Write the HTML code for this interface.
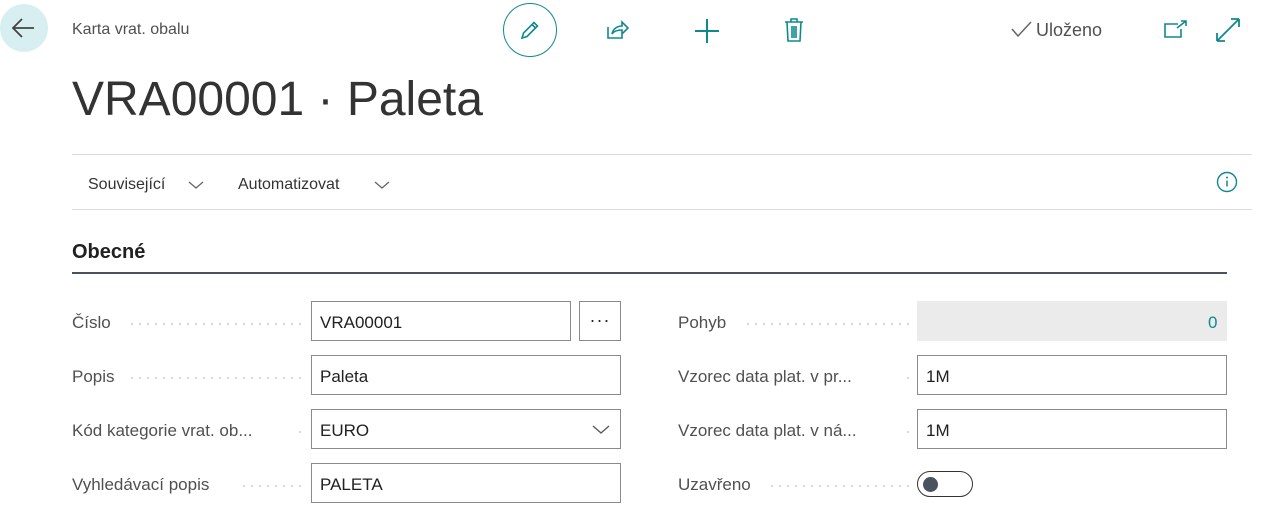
<!DOCTYPE html>
<html><head><meta charset="utf-8"><style>
body{margin:0;width:1280px;height:511px;overflow:hidden;background:#fff;font-family:"Liberation Sans",sans-serif;color:#505050;position:relative}
.a{position:absolute}
.lbl{position:absolute;font-size:17px;color:#505050;white-space:nowrap}
.dots{position:absolute;height:2px;background-image:radial-gradient(circle,#cfcfcf 0.9px,transparent 1.1px);background-size:8px 2px;background-repeat:repeat-x}
.inp{position:absolute;box-sizing:border-box;height:40px;border:1px solid #8a8a8a;background:#fff;font-size:17px;color:#212121;padding:11px 0 0 8px}
</style></head><body>
<div class="a" style="left:0;top:4px;width:48px;height:48px;border-radius:50%;background:#d8eff2"></div>
<svg class="a" style="left:10px;top:16px" width="26" height="24" viewBox="0 0 26 24"><path d="M24 12H3M12 3L3 12l9 9" stroke="#444" stroke-width="1.8" fill="none"/></svg>
<div class="a" style="left:72px;top:21px;font-size:16px;color:#505050">Karta vrat. obalu</div>
<div class="a" style="left:503px;top:3px;width:52px;height:52px;border:1.5px solid #0e8a8f;border-radius:50%"></div>
<svg class="a" style="left:518px;top:18px" width="24" height="24" viewBox="0 0 24 24"><path d="M4 20l1.5-5L16 4.5l3.5 3.5L9 18.5z M14 6.5l3.5 3.5" stroke="#0e8a8f" stroke-width="1.6" fill="none"/></svg>
<svg class="a" style="left:605px;top:18px" width="26" height="24" viewBox="0 0 26 24"><path d="M3 9v11h14v-4M7 16c1-5 5-8 10-8V4l6 6-6 6v-4c-4 0-8 1-10 4z" stroke="#0e8a8f" stroke-width="1.6" fill="none"/></svg>
<svg class="a" style="left:694px;top:18px" width="26" height="26" viewBox="0 0 26 26"><path d="M13 1v24M1 13h24" stroke="#0e8a8f" stroke-width="2" fill="none"/></svg>
<svg class="a" style="left:782px;top:17px" width="24" height="26" viewBox="0 0 24 26"><path d="M3 5h18M9 5V2h6v3M5 5l1 19h12l1-19M10 9v12M12 9v12M14 9v12" stroke="#0e8a8f" stroke-width="1.6" fill="none"/></svg>
<svg class="a" style="left:1011px;top:20px" width="22" height="18" viewBox="0 0 22 18"><path d="M1 9l6 7L20 2" stroke="#666" stroke-width="1.5" fill="none"/></svg>
<div class="a" style="left:1036px;top:20px;font-size:18px;color:#505050">Uloženo</div>
<svg class="a" style="left:1163px;top:18px" width="26" height="24" viewBox="0 0 26 24"><path d="M15 6H2v13h16v-8M14 10l9-7M18 3h5v5" stroke="#0e8a8f" stroke-width="1.6" fill="none"/></svg>
<svg class="a" style="left:1215px;top:17px" width="26" height="26" viewBox="0 0 26 26"><path d="M2 24L24 2M2 24v-8M2 24h8M24 2h-8M24 2v8" stroke="#0e8a8f" stroke-width="1.8" fill="none"/></svg>
<div class="a" style="left:72px;top:72px;font-size:48px;color:#333;font-weight:300">VRA00001 · Paleta</div>
<div class="a" style="left:72px;top:154px;width:1180px;height:1px;background:#dcdcdc"></div>
<div class="a" style="left:88px;top:176px;font-size:16px;color:#333">Související</div>
<svg class="a" style="left:188px;top:180px" width="16" height="10"><path d="M1 2l7 6 7-6" stroke="#666" stroke-width="1.3" fill="none"/></svg>
<div class="a" style="left:238px;top:176px;font-size:16px;color:#333">Automatizovat</div>
<svg class="a" style="left:374px;top:180px" width="16" height="10"><path d="M1 2l7 6 7-6" stroke="#666" stroke-width="1.3" fill="none"/></svg>
<svg class="a" style="left:1216px;top:171px" width="22" height="22" viewBox="0 0 22 22"><circle cx="11" cy="11" r="9.5" stroke="#0e8a8f" stroke-width="1.4" fill="none"/><path d="M11 9.5v6" stroke="#0e8a8f" stroke-width="1.5"/><circle cx="11" cy="6.5" r="1" fill="#0e8a8f"/></svg>
<div class="a" style="left:72px;top:209px;width:1180px;height:1px;background:#dcdcdc"></div>
<div class="a" style="left:72px;top:241px;font-size:20px;font-weight:bold;color:#212121">Obecné</div>
<div class="a" style="left:72px;top:272px;width:1155px;height:2px;background:#4a5260"></div>

<div class="lbl" style="left:72px;top:313px">Číslo</div><div class="dots" style="left:128px;top:323px;width:176px"></div>
<div class="inp" style="left:311px;top:301px;width:260px">VRA00001</div>
<div class="inp" style="left:579px;top:301px;width:42px;padding:0;text-align:center;font-size:18px;line-height:36px;letter-spacing:1px">···</div>
<div class="lbl" style="left:72px;top:367px">Popis</div><div class="dots" style="left:128px;top:377px;width:176px"></div>
<div class="inp" style="left:311px;top:355px;width:310px">Paleta</div>
<div class="lbl" style="left:72px;top:421px">Kód kategorie vrat. ob...</div><div class="dots" style="left:296px;top:431px;width:8px"></div>
<div class="inp" style="left:311px;top:409px;width:310px">EURO</div>
<svg class="a" style="left:592px;top:424px" width="18" height="11"><path d="M1 2l8 7 8-7" stroke="#555" stroke-width="1.3" fill="none"/></svg>
<div class="lbl" style="left:72px;top:475px">Vyhledávací popis</div><div class="dots" style="left:240px;top:485px;width:64px"></div>
<div class="inp" style="left:311px;top:463px;width:310px">PALETA</div>

<div class="lbl" style="left:678px;top:313px">Pohyb</div><div class="dots" style="left:744px;top:323px;width:168px"></div>
<div class="a" style="left:917px;top:301px;width:310px;height:40px;background:#ebebeb"></div>
<div class="a" style="left:1208px;top:313px;font-size:17px;color:#0e8a8f">0</div>
<div class="lbl" style="left:678px;top:367px">Vzorec data plat. v pr...</div><div class="dots" style="left:904px;top:377px;width:8px"></div>
<div class="inp" style="left:917px;top:355px;width:310px">1M</div>
<div class="lbl" style="left:678px;top:421px">Vzorec data plat. v ná...</div><div class="dots" style="left:904px;top:431px;width:8px"></div>
<div class="inp" style="left:917px;top:409px;width:310px">1M</div>
<div class="lbl" style="left:678px;top:475px">Uzavřeno</div><div class="dots" style="left:768px;top:485px;width:144px"></div>
<div class="a" style="left:917px;top:471px;width:56px;height:26px;box-sizing:border-box;border:1.5px solid #333;border-radius:13px"></div>
<div class="a" style="left:923px;top:477px;width:15px;height:15px;border-radius:50%;background:#4a5260"></div>
</body></html>
